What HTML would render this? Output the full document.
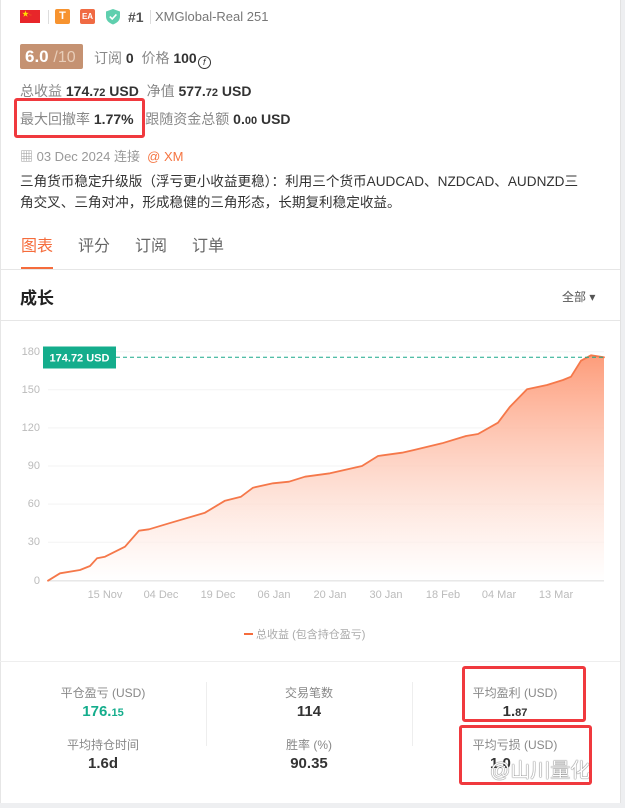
<!DOCTYPE html>
<html><head><meta charset="utf-8"><style>
*{margin:0;padding:0;box-sizing:border-box}
body{width:625px;height:808px;background:#fff;font-family:"Liberation Sans","Noto Sans CJK SC",sans-serif;position:relative;overflow:hidden;color:#333}
.a{position:absolute;white-space:nowrap}
.g{color:#888}
.b{font-weight:bold;color:#333}
.rb{position:absolute;border:3px solid #f0393e;border-radius:3px}
</style></head><body>
<div class="a" style="left:0;top:0;width:1px;height:808px;background:#e6e6e6"></div>
<div class="a" style="left:620px;top:0;width:5px;height:808px;background:#eeeff1;border-left:1px solid #e2e2e2"></div>
<div class="a" style="left:0;top:803px;width:625px;height:5px;background:#eeeff1"></div>

<div class="a" style="left:20px;top:10px;width:20px;height:13px;background:#e8262a"></div>
<div class="a" style="left:22px;top:10px;color:#ffde00;font-size:7px;line-height:9px">★<span style="font-size:4px">·:</span></div>
<div class="a" style="left:48px;top:10px;width:1px;height:14px;background:#ddd"></div>
<div class="a" style="left:55px;top:9px;width:15px;height:15px;background:#f7932f;border-radius:2px;color:#fff;font-size:11px;font-weight:bold;text-align:center;line-height:15px">T</div>
<div class="a" style="left:80px;top:9px;width:15px;height:15px;background:#f06a43;border-radius:2px;color:#fff;font-size:8px;font-weight:bold;text-align:center;line-height:15px">EA</div>
<svg class="a" style="left:105px;top:8px" width="16" height="17" viewBox="0 0 16 17"><path d="M8 1L15 3.5V8.5C15 12.5 12 15 8 16.5C4 15 1 12.5 1 8.5V3.5Z" fill="#5fcfae"/><path d="M4.8 8.6L7.2 11L11.4 6.4" stroke="#fff" stroke-width="1.6" fill="none"/></svg>
<div class="a" style="left:128px;top:9px;font-size:14px;font-weight:bold;color:#555">#1</div>
<div class="a" style="left:150px;top:10px;width:1px;height:14px;background:#ddd"></div>
<div class="a g" style="left:155px;top:9px;font-size:13px;color:#777">XMGlobal-Real 251</div>

<div class="a" style="left:20px;top:44px;width:63px;height:25px;background:#c59272;border-radius:2px;color:#fff;font-size:17px;line-height:25px;padding-left:5px"><b>6.0</b> <span style="color:#e8cdb8;font-size:16px">/10</span></div>
<div class="a" style="left:94px;top:48px;font-size:14px"><span class="g">订阅</span> <b>0</b> &nbsp;<span class="g">价格</span> <b>100</b><span style="display:inline-block;width:13px;height:13px;border:1.5px solid #333;border-radius:50%;font-size:9px;line-height:10px;text-align:center;font-style:italic;vertical-align:-2px;margin-left:1px">f</span></div>
<div class="a" style="left:20px;top:81px;font-size:14px"><span class="g">总收益</span> <b>174.<span style="font-size:11px">72</span> USD</b> &nbsp;<span class="g">净值</span> <b>577.<span style="font-size:11px">72</span> USD</b></div>
<div class="a" style="left:20px;top:109px;font-size:14px"><span class="g">最大回撤率</span> <b>1.77%</b> &nbsp;&nbsp;<span class="g">跟随资金总额</span> <b>0.<span style="font-size:11px">00</span> USD</b></div>
<div class="rb" style="left:14px;top:98px;width:131px;height:40px"></div>

<div class="a" style="left:20px;top:146px;font-size:13px;color:#999">▦ 03 Dec 2024 连接 &nbsp;<span style="color:#f57542">@ XM</span></div>
<div class="a" style="left:20px;top:171px;font-size:13.6px;line-height:21px;color:#333;width:600px">三角货币稳定升级版（浮亏更小收益更稳）：利用三个货币AUDCAD、NZDCAD、AUDNZD三<br>角交叉、三角对冲，形成稳健的三角形态，长期复利稳定收益。</div>

<div class="a" style="left:21px;top:232px;font-size:16px;color:#f56c3c">图表</div>
<div class="a" style="left:78px;top:232px;font-size:16px;color:#666">评分</div>
<div class="a" style="left:135px;top:232px;font-size:16px;color:#666">订阅</div>
<div class="a" style="left:192px;top:232px;font-size:16px;color:#666">订单</div>
<div class="a" style="left:21px;top:267px;width:32px;height:2px;background:#f56c3c"></div>
<div class="a" style="left:0;top:269px;width:620px;height:1px;background:#e6e6e6"></div>
<div class="a" style="left:20px;top:284px;font-size:17px;font-weight:bold;color:#222">成长</div>
<div class="a" style="left:562px;top:288px;font-size:12px;color:#555">全部 ▾</div>
<div class="a" style="left:0;top:320px;width:620px;height:1px;background:#e6e6e6"></div>

<svg class="a" style="left:0;top:330px" width="620" height="280">
<defs><linearGradient id="gr" x1="0" y1="0" x2="0" y2="1"><stop offset="0" stop-color="#fd9c7a"/><stop offset="1" stop-color="#fff" stop-opacity="0.6"/></linearGradient></defs>
<g stroke="#f3f3f3" stroke-width="1"><line x1="48" x2="604" y1="21.7" y2="21.7"/><line x1="48" x2="604" y1="59.8" y2="59.8"/><line x1="48" x2="604" y1="97.9" y2="97.9"/><line x1="48" x2="604" y1="136" y2="136"/><line x1="48" x2="604" y1="174.1" y2="174.1"/><line x1="48" x2="604" y1="212.2" y2="212.2"/></g>
<line x1="48" x2="604" y1="250.7" y2="250.7" stroke="#ccc"/>
<g font-size="11" fill="#bbb" text-anchor="end" font-family="Liberation Sans"><text x="40" y="25">180</text><text x="40" y="63">150</text><text x="40" y="101">120</text><text x="40" y="139">90</text><text x="40" y="177">60</text><text x="40" y="215">30</text><text x="40" y="254">0</text></g>
<g font-size="11" fill="#bbb" text-anchor="middle" font-family="Liberation Sans"><text x="105" y="268">15 Nov</text><text x="161" y="268">04 Dec</text><text x="218" y="268">19 Dec</text><text x="274" y="268">06 Jan</text><text x="330" y="268">20 Jan</text><text x="386" y="268">30 Jan</text><text x="443" y="268">18 Feb</text><text x="499" y="268">04 Mar</text><text x="556" y="268">13 Mar</text></g>
<path d="M48 250.7L60 243.3L80 240L90 236L97 228.3L105 226.7L125 216.7L139 200.7L149 199.3L169 193.3L205 182.7L225 170.7L241 166.7L253 157.7L273 153.3L289 151.7L305 146.7L330 143.3L362 136L378 126L402 122.7L414 120L442 113.3L466 106L478 104L498 92.7L510 76.7L527 59.3L547 55L563 50L571 46.7L581 30.7L591 25.3L604 27.3L604 250.7Z" fill="url(#gr)"/>
<path d="M48 250.7L60 243.3L80 240L90 236L97 228.3L105 226.7L125 216.7L139 200.7L149 199.3L169 193.3L205 182.7L225 170.7L241 166.7L253 157.7L273 153.3L289 151.7L305 146.7L330 143.3L362 136L378 126L402 122.7L414 120L442 113.3L466 106L478 104L498 92.7L510 76.7L527 59.3L547 55L563 50L571 46.7L581 30.7L591 25.3L604 27.3" fill="none" stroke="#f5784a" stroke-width="1.8" stroke-linejoin="round" stroke-linecap="round"/>
<line x1="116" x2="604" y1="27.3" y2="27.3" stroke="#1aa98a" stroke-dasharray="4 3"/>
<rect x="43" y="16.5" width="73" height="22" fill="#14ad8c"/>
<text x="79.5" y="31.5" font-size="11" font-weight="bold" fill="#fff" text-anchor="middle" font-family="Liberation Sans">174.72 USD</text>
</svg>
<div class="a" style="left:244px;top:626px;font-size:11px;color:#aaa"><span style="display:inline-block;width:9px;height:2px;background:#f56c3c;vertical-align:3px"></span> 总收益 (包含持仓盈亏)</div>
<div class="a" style="left:0;top:661px;width:620px;height:1px;background:#eee"></div>

<div class="a" style="left:206px;top:682px;width:1px;height:64px;background:#eee"></div>
<div class="a" style="left:412px;top:682px;width:1px;height:64px;background:#eee"></div>
<div class="a" style="left:0;top:684px;width:206px;text-align:center;font-size:12px;color:#888">平仓盈亏 (USD)</div>
<div class="a" style="left:0;top:703px;width:206px;text-align:center;font-size:15px;font-weight:bold;color:#14ad8c">176.<span style="font-size:11px">15</span></div>
<div class="a" style="left:206px;top:684px;width:206px;text-align:center;font-size:12px;color:#888">交易笔数</div>
<div class="a" style="left:206px;top:703px;width:206px;text-align:center;font-size:15px;font-weight:bold;color:#333">114</div>
<div class="a" style="left:412px;top:684px;width:206px;text-align:center;font-size:12px;color:#888">平均盈利 (USD)</div>
<div class="a" style="left:412px;top:703px;width:206px;text-align:center;font-size:15px;font-weight:bold;color:#333">1.<span style="font-size:11px">87</span></div>
<div class="a" style="left:0;top:736px;width:206px;text-align:center;font-size:12px;color:#888">平均持仓时间</div>
<div class="a" style="left:0;top:755px;width:206px;text-align:center;font-size:15px;font-weight:bold;color:#333">1.6d</div>
<div class="a" style="left:206px;top:736px;width:206px;text-align:center;font-size:12px;color:#888">胜率 (%)</div>
<div class="a" style="left:206px;top:755px;width:206px;text-align:center;font-size:15px;font-weight:bold;color:#333">90.35</div>
<div class="a" style="left:412px;top:736px;width:206px;text-align:center;font-size:12px;color:#888">平均亏损 (USD)</div>
<div class="a" style="left:490px;top:755px;font-size:15px;font-weight:bold;color:#333">1.0</div>
<div class="a" style="left:490px;top:754px;font-size:20px;color:#fff;text-shadow:0 0 1px #555,0 0 1px #555">@山川量化</div>
<div class="rb" style="left:462px;top:666px;width:124px;height:56px"></div>
<div class="rb" style="left:459px;top:725px;width:133px;height:60px"></div>
</body></html>
